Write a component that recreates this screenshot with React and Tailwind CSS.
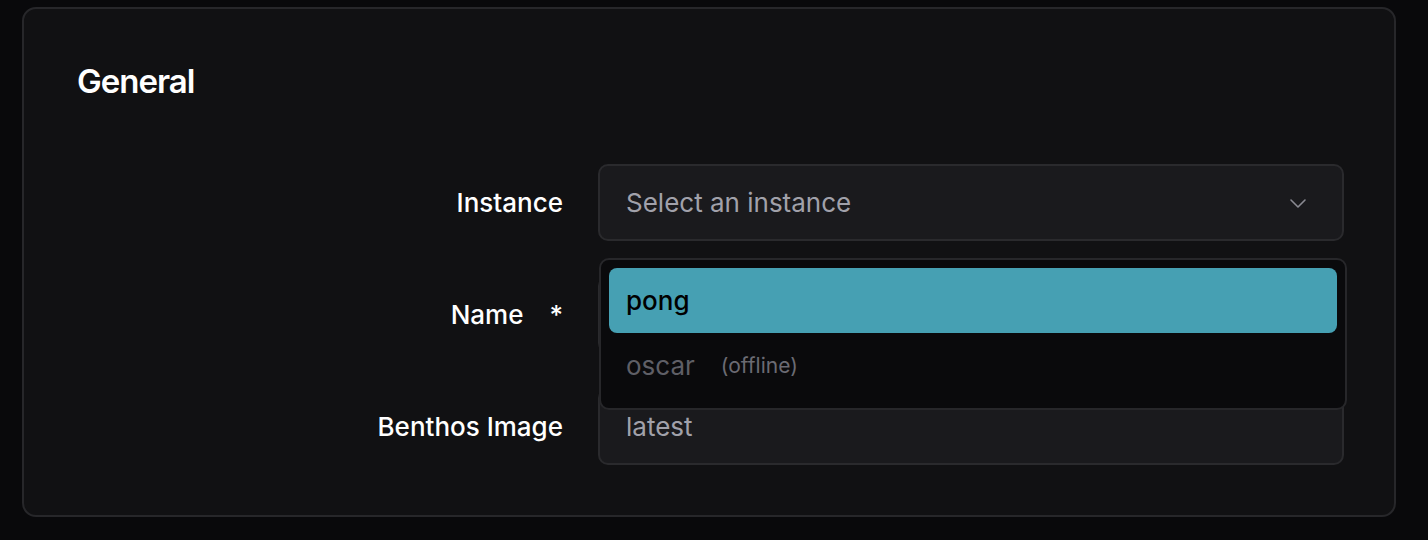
export default function App() {
  return (
    <div className="min-h-[540px] w-[1428px] bg-[#09090b] pt-[7px] pl-[22px] pr-[32px]" style={{ fontFamily: "Inter, 'Noto Sans', sans-serif" }}>
      <div className="w-[1374px] h-[510px] rounded-[14px] border-2 border-[#27272a] bg-[#111113] pl-[53px] pr-[51px] pt-[51px]">
        <h2 className="text-[33px] leading-[42px] font-semibold tracking-[-0.03em] text-white">General</h2>
        <div className="mt-[62px] grid grid-cols-[486px_746px] gap-x-[35px] gap-y-[35px]">
          <div className="flex items-center justify-end text-[26px] font-medium text-white">Instance</div>
          <div className="relative">
            <div className="h-[77px] rounded-[10px] border-2 border-[#2a2a2d] bg-[#1a1a1d] flex items-center justify-between pl-[26px] pr-[32px]">
              <span className="text-[26px] text-[#a1a1aa]">Select an instance</span>
              <svg width="24" height="24" viewBox="0 0 24 24" fill="none" stroke="#8a8a92" strokeWidth="1.6" strokeLinecap="round" strokeLinejoin="round"><path d="M5 9l7 7 7-7" /></svg>
            </div>
            <div className="absolute left-[1px] top-[94px] z-10 w-[748px] rounded-[10px] border-2 border-[#27272a] bg-[#0a0a0c] p-[8px] pb-[10px]">
              <div className="h-[65px] rounded-[8px] bg-[#46a0b3] flex items-center pl-[17px] text-[26px] font-medium text-black">pong</div>
              <div className="h-[65px] flex items-center pl-[17px] text-[26px] text-[#5f5f66]">
                oscar<span className="ml-[26px] text-[21px] text-[#6b6b73]">(offline)</span>
              </div>
            </div>
          </div>
          <div className="flex items-center justify-end text-[26px] font-medium text-white">Name<span className="ml-[26px]">*</span></div>
          <div className="h-[77px] rounded-[10px] border-2 border-[#2a2a2d] bg-[#1a1a1d]"></div>
          <div className="flex items-center justify-end text-[26px] font-medium text-white">Benthos Image</div>
          <div className="h-[77px] rounded-[10px] border-2 border-[#2a2a2d] bg-[#1a1a1d] flex items-center pl-[26px] text-[26px] text-[#a1a1aa]">latest</div>
        </div>
      </div>
    </div>
  );
}
